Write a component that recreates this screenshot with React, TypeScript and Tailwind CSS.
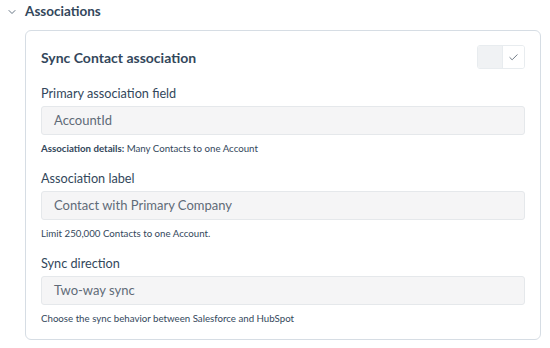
import { ChevronDown, Check } from "lucide-react";

const font = { fontFamily: "Lato, 'Open Sans', sans-serif" };

function Field({ label, value, help }: { label: string; value: string; help: React.ReactNode }) {
    return (
        <div className="mt-[16px]">
            <div className="text-[12.7px] leading-[16px] text-[#33475b]">{label}</div>
            <div className="mt-[5px] h-[29px] rounded-[3px] border border-[#e5e8eb] bg-[#f5f5f6] pl-[12px] flex items-center text-[13px] text-[#5f6b78]">
                {value}
            </div>
            <div className="mt-[7px] text-[9.7px] leading-[12px] text-[#33475b]">{help}</div>
        </div>
    );
}

export default function App() {
    return (
        <div className="w-[550px] h-[348px] bg-white" style={font}>
            <div className="flex items-center h-[22px] pl-[6px] pt-[1px]">
                <ChevronDown size={12} strokeWidth={1.5} className="text-[#33475b]" />
                <span className="ml-[7px] text-[13.5px] font-bold text-[#33475b]">Associations</span>
            </div>
            <div className="ml-[25px] mr-[9px] mt-[8px] h-[310px] rounded-[6px] border border-[#d6dde4] px-[15px] pt-[14px]">
                <div className="flex items-center justify-between">
                    <span className="text-[14px] font-bold text-[#33475b]">Sync Contact association</span>
                    <div className="flex h-[24px] w-[48px] rounded-[3px] border border-[#e8ecef] overflow-hidden">
                        <div className="w-[24px] bg-[#f0f2f4]" />
                        <div className="flex-1 flex items-center justify-center border-l border-[#e8ecef] bg-white">
                            <Check size={11} strokeWidth={1.7} className="text-[#4a5866]" />
                        </div>
                    </div>
                </div>
                <Field
                    label="Primary association field"
                    value="AccountId"
                    help={<><span className="font-bold">Association details:</span> Many Contacts to one Account</>}
                />
                <Field label="Association label" value="Contact with Primary Company" help="Limit 250,000 Contacts to one Account." />
                <Field label="Sync direction" value="Two-way sync" help="Choose the sync behavior between Salesforce and HubSpot" />
            </div>
        </div>
    );
}
